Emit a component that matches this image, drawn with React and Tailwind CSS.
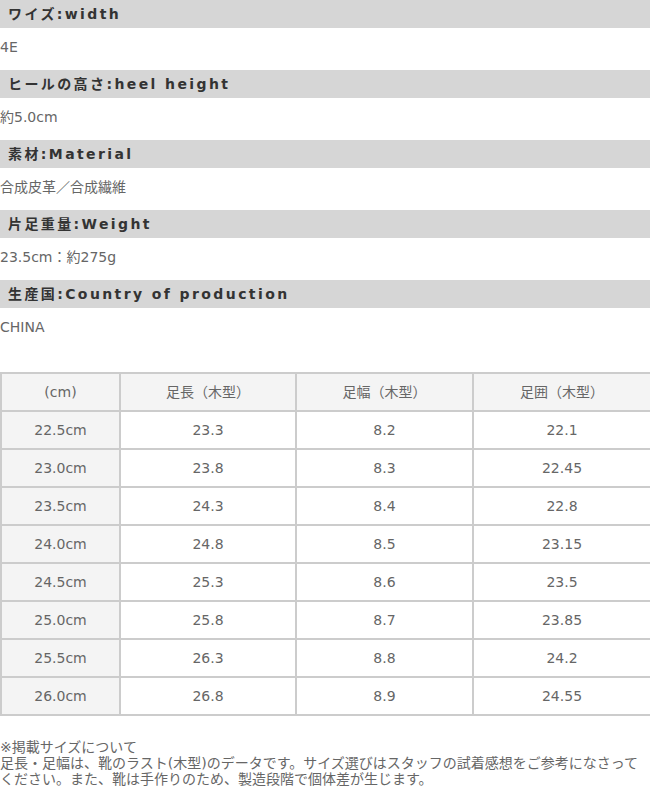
const specs = [
  {label: 'ワイズ:width', value: '4E'},
  {label: 'ヒールの高さ:heel height', value: '約5.0cm'},
  {label: '素材:Material', value: '合成皮革／合成繊維'},
  {label: '片足重量:Weight', value: '23.5cm：約275g'},
  {label: '生産国:Country of production', value: 'CHINA'},
]

const sizes = [
  ['22.5cm', '23.3', '8.2', '22.1'],
  ['23.0cm', '23.8', '8.3', '22.45'],
  ['23.5cm', '24.3', '8.4', '22.8'],
  ['24.0cm', '24.8', '8.5', '23.15'],
  ['24.5cm', '25.3', '8.6', '23.5'],
  ['25.0cm', '25.8', '8.7', '23.85'],
  ['25.5cm', '26.3', '8.8', '24.2'],
  ['26.0cm', '26.8', '8.9', '24.55'],
]

const font = {fontFamily: '"DejaVu Sans", "Noto Sans CJK JP", sans-serif'}

export default function App(){
    return (
        <div className="w-[650px] bg-white text-[#666]" style={font}>
            {specs.map(s => (
                <div key={s.label}>
                    <h3 className="h-[28px] bg-[#d6d6d6] flex items-center pl-2 text-[14px] font-bold tracking-[2.4px] text-[#333]">
                        {s.label}
                    </h3>
                    <p className="h-[42px] flex items-center pb-1 text-[14px]">{s.value}</p>
                </div>
            ))}

            <table className="mt-[22px] w-[650px] table-fixed border-collapse border-2 border-[#ccc] text-[14px] text-center">
                <colgroup>
                    <col className="w-[119px]"/>
                    <col className="w-[176px]"/>
                    <col className="w-[177px]"/>
                    <col className="w-[178px]"/>
                </colgroup>
                <thead>
                    <tr className="h-[38px] bg-[#f4f4f4]">
                        <th className="border-2 border-[#ccc] font-normal">(cm)</th>
                        <th className="border-2 border-[#ccc] font-normal">足長（木型）</th>
                        <th className="border-2 border-[#ccc] font-normal">足幅（木型）</th>
                        <th className="border-2 border-[#ccc] font-normal">足囲（木型）</th>
                    </tr>
                </thead>
                <tbody>
                    {sizes.map(row => (
                        <tr key={row[0]} className="h-[38px]">
                            <td className="border-2 border-[#ccc] bg-[#f4f4f4]">{row[0]}</td>
                            <td className="border-2 border-[#ccc]">{row[1]}</td>
                            <td className="border-2 border-[#ccc]">{row[2]}</td>
                            <td className="border-2 border-[#ccc]">{row[3]}</td>
                        </tr>
                    ))}
                </tbody>
            </table>

            <div className="mt-[23px] text-[14px] leading-[16px]">
                <p>※掲載サイズについて</p>
                <p>足長・足幅は、靴のラスト(木型)のデータです。サイズ選びはスタッフの試着感想をご参考になさってください。また、靴は手作りのため、製造段階で個体差が生じます。</p>
            </div>
        </div>
    )
}
